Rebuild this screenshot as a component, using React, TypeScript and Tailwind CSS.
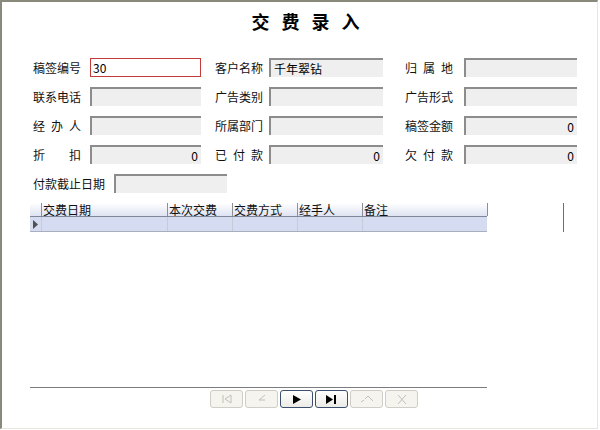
import React from "react";

const font = { fontFamily: '"Noto Sans CJK SC", "Liberation Sans", sans-serif' };

function Field({ value = "", right = false, width, active = false }: { value?: string; right?: boolean; width: string; active?: boolean }) {
  if (active) {
    return (
      <div className={`${width} h-[19px] border border-[#c23a3a] bg-white px-[2px] text-[12px] leading-[17px] text-black`}>
        {value}
      </div>
    );
  }
  return (
    <div
      className={`${width} h-[19px] border-t-2 border-l-2 border-t-[#8c8c8c] border-l-[#8c8c8c] bg-[#efefef] px-[3px] text-[12px] leading-[17px] text-black ${
        right ? "text-right pr-[3px]" : ""
      }`}
    >
      {value}
    </div>
  );
}

function Label({ text, width, spread = false }: { text: string; width: string; spread?: boolean }) {
  if (spread) {
    return (
      <div className={`${width} shrink-0`}>
        <span className="flex w-[48px] justify-between text-[12px] text-[#111]">
          {text.split("").map((c, i) => (
            <span key={i}>{c}</span>
          ))}
        </span>
      </div>
    );
  }
  return <div className={`${width} shrink-0 text-[12px] text-[#111]`}>{text}</div>;
}

type Cell = { label: string; spread?: boolean; value?: string; right?: boolean; active?: boolean };

function Row({ cells }: { cells: [Cell, Cell, Cell] }) {
  const [a, b, c] = cells;
  return (
    <div className="flex h-[19px] items-center pl-[31px]">
      <Label text={a.label} width="w-[57px]" spread={a.spread} />
      <Field width="w-[111px]" value={a.value} right={a.right} active={a.active} />
      <div className="w-[14px]" />
      <Label text={b.label} width="w-[54px]" spread={b.spread} />
      <Field width="w-[114px]" value={b.value} right={b.right} />
      <div className="w-[22px]" />
      <Label text={c.label} width="w-[59px]" spread={c.spread} />
      <Field width="w-[113px]" value={c.value} right={c.right} />
    </div>
  );
}

function NavButton({ enabled, children }: { enabled: boolean; children: React.ReactNode }) {
  return (
    <div
      className={`flex h-[18px] w-[33px] items-center justify-center rounded-[3px] border ${
        enabled ? "border-[#3d4f6e] bg-gradient-to-b from-white to-[#ecebe6]" : "border-[#cfcdc4] bg-[#f5f4ef]"
      }`}
    >
      {children}
    </div>
  );
}

export default function App() {
  const cols = [
    { name: "交费日期", w: "w-[126px]" },
    { name: "本次交费", w: "w-[65px]" },
    { name: "交费方式", w: "w-[65px]" },
    { name: "经手人", w: "w-[65px]" },
    { name: "备注", w: "w-[125px]" },
  ];
  return (
    <div className="h-[430px] w-[600px] bg-white" style={font}>
      <div className="flex h-[429px] w-[598px] flex-col border-t-2 border-l-2 border-t-[#8a8a7c] border-l-[#8a8a7c] border-r border-b border-r-[#e6e6e0] border-b-[#e6e6e0] bg-white">
        <div className="flex h-[56px] justify-center pt-[6px]">
          <div className="ml-[24px] text-[18px] font-bold tracking-[12px] text-black">交费录入</div>
        </div>
        <div className="flex flex-col gap-[10px]">
          <Row
            cells={[
              { label: "稿签编号", value: "30", active: true },
              { label: "客户名称", value: "千年翠钻" },
              { label: "归属地", spread: true },
            ]}
          />
          <Row cells={[{ label: "联系电话" }, { label: "广告类别" }, { label: "广告形式" }]} />
          <Row
            cells={[
              { label: "经办人", spread: true },
              { label: "所属部门" },
              { label: "稿签金额", value: "0", right: true },
            ]}
          />
          <Row
            cells={[
              { label: "折扣", spread: true, value: "0", right: true },
              { label: "已付款", spread: true, value: "0", right: true },
              { label: "欠付款", spread: true, value: "0", right: true },
            ]}
          />
          <div className="flex h-[19px] items-center pl-[31px]">
            <div className="w-[81px] shrink-0 text-[12px] text-[#111]">付款截止日期</div>
            <Field width="w-[113px]" />
          </div>
        </div>

        <div className="mt-[10px] flex pl-[28px]">
          <div className="flex w-[457px] flex-col">
            <div className="flex h-[14px] border-b border-[#7d8797] bg-gradient-to-b from-white to-[#dfe3f2] text-[12px] leading-[14px] text-[#111]">
              <div className="w-[11px] shrink-0" />
              {cols.map((c) => (
                <div key={c.name} className={`${c.w} shrink-0 border-l border-[#8a8f9a] pl-[1px]`}>
                  {c.name}
                </div>
              ))}
              <div className="border-l border-[#8a8f9a]" />
            </div>
            <div className="flex h-[15px] border-b border-[#a9afbd] bg-[#d5dcf1]">
              <div className="flex w-[11px] shrink-0 items-center justify-center">
                <svg width="5" height="9" viewBox="0 0 5 9">
                  <path d="M0 0 L5 4.5 L0 9 Z" fill="#505050" />
                </svg>
              </div>
              {cols.map((c) => (
                <div key={c.name} className={`${c.w} shrink-0 border-l border-[#c5cbdb]`} />
              ))}
            </div>
          </div>
          <div className="ml-[76px] h-[29px] w-px bg-[#6f6f6f]" />
        </div>

        <div className="flex-1" />

        <div className="ml-[28px] h-px w-[457px] bg-[#7c7c7c]" />
        <div className="mt-[2px] flex gap-[2px] pl-[208px]">
          <NavButton enabled={false}>
            <svg width="12" height="10" viewBox="0 0 12 10">
              <path d="M2 1 V9 M10 1 L4 5 L10 9 Z" stroke="#c2c0b6" fill="none" strokeWidth="1" />
            </svg>
          </NavButton>
          <NavButton enabled={false}>
            <svg width="10" height="10" viewBox="0 0 10 10">
              <path d="M8 1 L2 6 L8 6" stroke="#c2c0b6" fill="none" strokeWidth="1" />
            </svg>
          </NavButton>
          <NavButton enabled>
            <svg width="8" height="9" viewBox="0 0 8 9">
              <path d="M0 0 L8 4.5 L0 9 Z" fill="#000" />
            </svg>
          </NavButton>
          <NavButton enabled>
            <svg width="11" height="9" viewBox="0 0 11 9">
              <path d="M0 0 L7 4.5 L0 9 Z" fill="#000" />
              <rect x="8" y="0" width="2" height="9" fill="#000" />
            </svg>
          </NavButton>
          <NavButton enabled={false}>
            <svg width="14" height="10" viewBox="0 0 14 10">
              <path d="M1 8 L4 6 M5 5 L8 2 L13 7" stroke="#c2c0b6" fill="none" strokeWidth="1" />
            </svg>
          </NavButton>
          <NavButton enabled={false}>
            <svg width="10" height="11" viewBox="0 0 10 11">
              <path d="M1 1 L9 10 M9 1 L1 10" stroke="#c2c0b6" fill="none" strokeWidth="1" />
            </svg>
          </NavButton>
        </div>
        <div className="h-[20px]" />
      </div>
    </div>
  );
}
